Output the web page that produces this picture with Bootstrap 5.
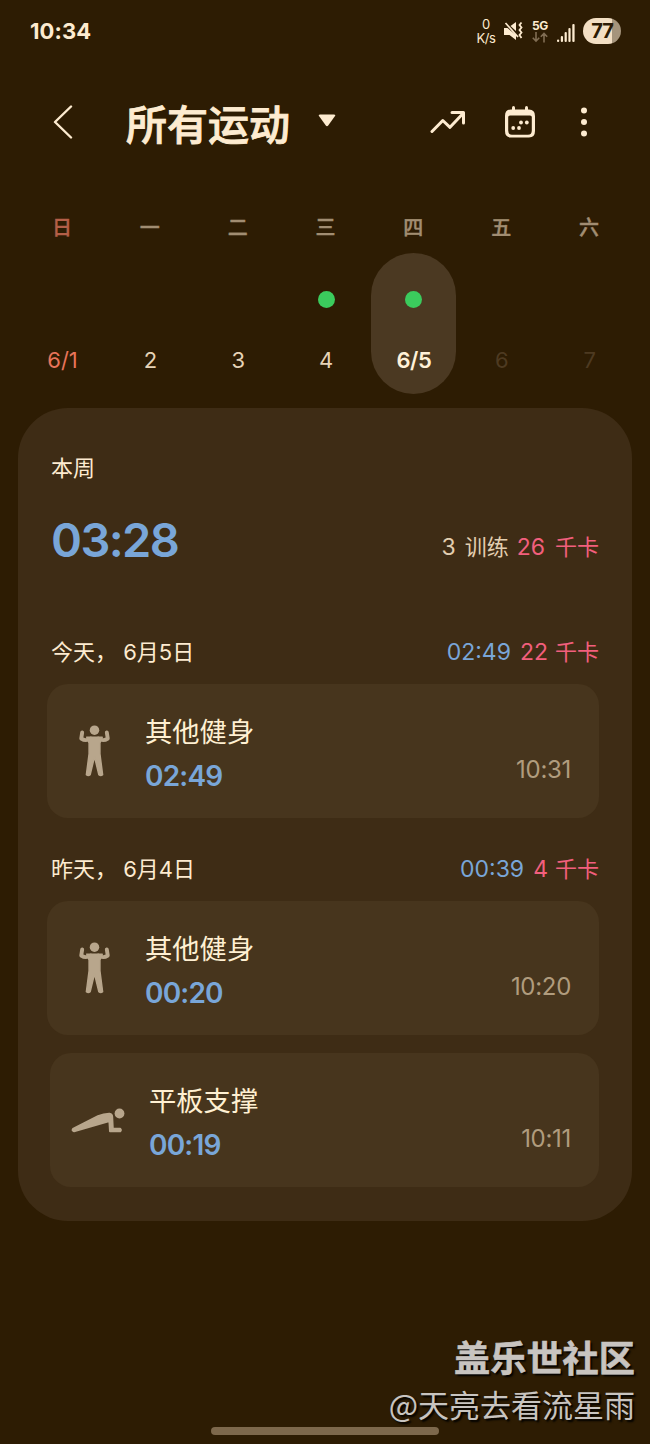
<!DOCTYPE html>
<html lang="zh-CN">
<head>
<meta charset="utf-8">
<meta name="viewport" content="width=device-width, initial-scale=1">
<title>所有运动</title>
<link rel="stylesheet" href="https://cdn.jsdelivr.net/npm/bootstrap@5.3.0/dist/css/bootstrap.min.css">
<style>
:root{--cream:#fdebd0;--blue:#79a6d8;--pink:#f25f7d;--tan:#b09c7e}
body{background:#2d1c03;color:var(--cream);font-family:Inter,"Noto Sans CJK SC",sans-serif;line-height:1;width:650px;height:1444px;overflow:hidden;position:relative}
svg{display:block;flex:none}
.status{height:62px;padding:0 29px 0 30px}
.clock{font-size:22px;font-weight:700;letter-spacing:.1px}
.speed{font-size:13px;line-height:14px;width:20px;font-weight:400;letter-spacing:-.4px}
.net{font-size:12px;width:16px;font-weight:700;letter-spacing:-.4px}
.battery{width:38px;height:26px;font-size:20px;font-weight:700;color:#2c1b04;background:linear-gradient(90deg,#f3dfc4 77%,#a5947c 77%);letter-spacing:-1px}
.topbar{height:120px;padding:0 62px 0 53px}
.topbar h1{font-size:41px;font-weight:500;line-height:60px;margin:6px 0 0 53px;-webkit-text-stroke:.9px var(--cream)}
.week{margin:0 17px 0 18px;height:226px;display:grid;grid-template-columns:repeat(7,1fr)}
.wd{height:30px;line-height:30px;font-size:20px;font-weight:500;color:#a18d72;margin:31px 0 10px;-webkit-text-stroke:.4px}
.day{width:85px;height:141px;border-radius:43px;padding-top:38px;font-size:22px;font-weight:400;color:#e6d3b7;position:relative;left:.6px}
.day i{display:block;width:17px;height:17px;border-radius:50%;margin-bottom:39px}
.day i.on{background:#3bcb5d}
.day span{height:26px;line-height:26px}
.day.sel{background:#4b3922;font-weight:600;color:#fff1d8}
.day.sel span{letter-spacing:-.4px}
.day.red{color:#e7745a}
.day.off{color:#4d3a21}
.panel{margin:0 18px;height:813px;border-radius:50px;background:#3e2c15;padding:44px 33px 0 29px}
.l22{font-size:22px;height:32px;line-height:32px;padding-left:4px}
.total{font-size:47px;font-weight:600;color:var(--blue);height:56px;line-height:56px;letter-spacing:-1.6px;margin-left:1px}
.sum{font-size:23px;line-height:32px}
.han{font-size:22px}
.blue{color:var(--blue)}.pink{color:var(--pink)}
.item{height:134px;border-radius:21px;background:#47351d;padding:0 28px}
.item .name{font-size:27.3px;line-height:40px;height:40px;color:#fff0d2}
.item .dur{font-size:28px;font-weight:600;line-height:34px;color:var(--blue);margin-top:6px;letter-spacing:-.8px}
.item .at{font-size:24px;line-height:30px;color:var(--tan);margin:37px 0 0;letter-spacing:-.3px}
.mark-by{right:15px;bottom:18px;color:#c8c4c0;text-shadow:2px 2px 2px #000;font-family:"Noto Sans CJK SC",sans-serif}
.mark-by b{font-size:36.200px;line-height:52px;font-weight:700;-webkit-text-stroke:.6px}
.mark-by span{font-size:31px;line-height:44px}
.homebar{left:211px;bottom:9px;width:228px;height:8px;border-radius:4px;background:#7d684c}
</style>
</head>
<body>
<svg width="0" height="0" class="position-absolute">
  <symbol id="flex" viewBox="0 0 32 54">
    <g fill="#b8a68c" stroke="#b8a68c" stroke-linejoin="round" stroke-linecap="round">
      <circle cx="16" cy="5.500" r="4.900" stroke="none"/>
      <path stroke-width="4" fill="none" d="M3.300 7.800 2.300 14.200Q7 17.300 12 14.200M28.700 7.800 29.700 14.200Q25 17.300 20 14.200"/>
      <path stroke-width="1.500" d="M8 12.800H24L21.600 18.800V30L24.400 51.500Q22.500 53.200 20.500 51.500L16 33 11.500 51.500Q9.500 53.200 7.600 51.500L10.400 30V18.800Z"/>
    </g>
  </symbol>
  <symbol id="plank" viewBox="0 0 54 26">
    <g fill="#b8a68c" stroke="#b8a68c" stroke-linejoin="round" stroke-linecap="round">
      <circle cx="48.500" cy="5.500" r="4.900" stroke="none"/>
      <path stroke-width="2" d="M2 21 27 8.200Q33 5.600 38.500 5.700Q41.300 6.200 41.200 9L41.800 20.800H49.300Q50.500 22.200 49.300 23.200H39L38.400 13 3 23.200Q.8 22.800 2 21Z"/>
    </g>
  </symbol>
</svg>

<header class="status d-flex align-items-center">
  <span class="clock me-auto">10:34</span>
  <div class="speed text-center">0<br>K/s</div>
  <svg class="ms-2" width="19" height="20" viewBox="0 0 19 20" fill="none" stroke="#fdebd0">
    <path fill="#fdebd0" stroke="none" d="M0 7H3.500L12 14V19L5.500 14H0ZM6.500 5 12 1V10Z"/>
    <path stroke-width="1.700" d="M1.500 2 14 16"/>
    <path stroke-width="1.800" d="M17.500 1.500 15.500 4 17.500 6.500 15.500 9 17.500 11.500 15.500 14 17.500 17"/>
  </svg>
  <div class="net d-flex flex-column align-items-center" style="margin-left:9px">5G
    <svg width="16" height="11" viewBox="0 0 16 11" fill="none" stroke="#806d53" stroke-width="1.600"><path d="M4 0V9M.8 5.800 4 9.200 7.200 5.800M12 10.500V1.500M8.800 4.800 12 1.400 15.200 4.800"/></svg>
  </div>
  <svg style="margin:3px 8px 0 9px" width="18" height="18" viewBox="0 0 18 18" fill="#fdebd0"><rect y="15.500" width="2.200" height="2.500" rx="1"/><rect x="3.800" y="12" width="2.200" height="6" rx="1"/><rect x="7.600" y="8" width="2.200" height="10" rx="1"/><rect x="11.400" y="4" width="2.200" height="14" rx="1"/><rect x="15.300" width="2.300" height="18" rx="1"/></svg>
  <div class="battery rounded-pill d-flex align-items-center justify-content-center">77</div>
</header>

<nav class="topbar d-flex align-items-center">
  <svg width="20" height="34" viewBox="0 0 20 34" fill="none" stroke="#fdebd0" stroke-width="2.400" stroke-linecap="round" stroke-linejoin="round"><path d="M18 1.500 2 17 18 32.500"/></svg>
  <h1>所有运动</h1>
  <svg style="margin:-3px auto 0 28px" width="18" height="13" viewBox="0 0 18 13" fill="#fdebd0"><path d="M2 .5H16Q18 .5 17 2L10.200 11.500Q9 13 7.800 11.500L1 2Q0 .5 2 .5Z"/></svg>
  <svg width="36" height="24" viewBox="0 0 36 24" fill="none" stroke="#fdebd0" stroke-width="3" stroke-linecap="round" stroke-linejoin="round"><path d="M2 21.500 12.800 10.500 20 17.300 33 3.500M22 2.500H33.500V13"/></svg>
  <svg style="margin-left:38px" width="32" height="32" viewBox="0 0 32 32" fill="#fdebd0"><path fill-rule="evenodd" d="M7 3.500H25Q31 3.500 31 10V25Q31 31.500 25 31.500H7Q1 31.500 1 25V10Q1 3.500 7 3.500ZM4.200 11V24.500Q4.200 28.700 8 28.700H24Q27.800 28.700 27.800 24.500V11Q27.800 9.500 26 9.500H6Q4.200 9.500 4.200 11Z"/><rect x="8" width="3" height="6" rx="1.500"/><rect x="21" width="3" height="6" rx="1.500"/><g><circle cx="9.200" cy="22" r="1.900"/><circle cx="15" cy="22" r="1.900"/><circle cx="17" cy="16.500" r="1.900"/><circle cx="22.800" cy="16.500" r="1.900"/></g></svg>
  <svg style="margin-left:44px" width="8" height="30" viewBox="0 0 8 30" fill="#fdebd0"><circle cx="4" cy="3.500" r="3"/><circle cx="4" cy="15" r="3"/><circle cx="4" cy="26.500" r="3"/></svg>
</nav>

<section class="week">
  <div class="d-flex flex-column align-items-center"><div class="wd" style="color:#b45f48">日</div><div class="day red d-flex flex-column align-items-center"><i></i><span>6/1</span></div></div>
  <div class="d-flex flex-column align-items-center"><div class="wd">一</div><div class="day d-flex flex-column align-items-center"><i></i><span>2</span></div></div>
  <div class="d-flex flex-column align-items-center"><div class="wd">二</div><div class="day d-flex flex-column align-items-center"><i></i><span>3</span></div></div>
  <div class="d-flex flex-column align-items-center"><div class="wd">三</div><div class="day d-flex flex-column align-items-center"><i class="on"></i><span>4</span></div></div>
  <div class="d-flex flex-column align-items-center"><div class="wd">四</div><div class="day sel d-flex flex-column align-items-center"><i class="on"></i><span>6/5</span></div></div>
  <div class="d-flex flex-column align-items-center"><div class="wd">五</div><div class="day off d-flex flex-column align-items-center"><i></i><span>6</span></div></div>
  <div class="d-flex flex-column align-items-center"><div class="wd">六</div><div class="day off d-flex flex-column align-items-center"><i></i><span>7</span></div></div>
</section>

<main class="panel">
  <div class="l22">本周</div>
  <div class="d-flex justify-content-between" style="margin-top:28px;padding-left:3px">
    <div class="total">03:28</div>
    <div class="sum d-flex" style="padding-top:19px;color:#e2ceb0"><span>3</span><span class="han" style="margin-left:9px">训练</span><span class="pink" style="margin-left:8px">26</span><span class="han pink" style="margin-left:10px">千卡</span></div>
  </div>
  <div class="d-flex justify-content-between" style="margin-top:68px">
    <div class="l22">今天，&nbsp;6月5日</div>
    <div class="sum d-flex"><span class="blue">02:49</span><span class="pink" style="margin-left:9px">22</span><span class="han pink" style="margin-left:7px">千卡</span></div>
  </div>
  <article class="item d-flex" style="margin-top:16px">
    <svg class="align-self-center" style="margin:0 35px 0 4px" width="31" height="54"><use href="#flex"/></svg>
    <div class="me-auto" style="padding-top:29px"><div class="name">其他健身</div><div class="dur">02:49</div></div>
    <time class="at align-self-center">10:31</time>
  </article>
  <div class="d-flex justify-content-between" style="margin-top:35px">
    <div class="l22">昨天，&nbsp;6月4日</div>
    <div class="sum d-flex"><span class="blue">00:39</span><span class="pink" style="margin-left:9px">4</span><span class="han pink" style="margin-left:7px">千卡</span></div>
  </div>
  <article class="item d-flex" style="margin-top:16px">
    <svg class="align-self-center" style="margin:0 35px 0 4px" width="31" height="54"><use href="#flex"/></svg>
    <div class="me-auto" style="padding-top:29px"><div class="name">其他健身</div><div class="dur">00:20</div></div>
    <time class="at align-self-center">10:20</time>
  </article>
  <article class="item d-flex" style="margin:18px 0 0 3px">
    <svg class="align-self-center" style="margin:2px 24px 0 -7px" width="54" height="26"><use href="#plank"/></svg>
    <div class="me-auto" style="padding-top:29px"><div class="name">平板支撑</div><div class="dur">00:19</div></div>
    <time class="at align-self-center">10:11</time>
  </article>
</main>

<div class="mark-by position-absolute d-flex flex-column align-items-end"><b>盖乐世社区</b><span>@天亮去看流星雨</span></div>
<div class="homebar position-absolute"></div>
<script src="https://cdn.jsdelivr.net/npm/bootstrap@5.3.0/dist/js/bootstrap.bundle.min.js"></script>
</body>
</html>
